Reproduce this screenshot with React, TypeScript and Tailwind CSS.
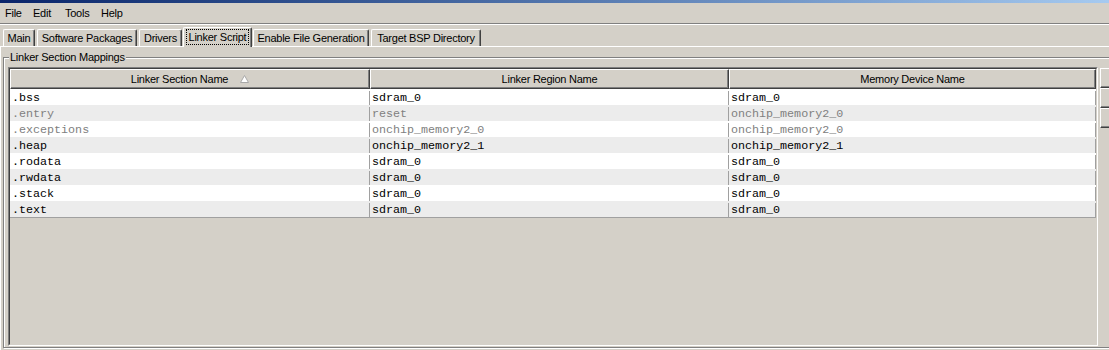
import React from "react";

const rows = [
  { section: ".bss", region: "sdram_0", device: "sdram_0", dim: false },
  { section: ".entry", region: "reset", device: "onchip_memory2_0", dim: true },
  { section: ".exceptions", region: "onchip_memory2_0", device: "onchip_memory2_0", dim: true },
  { section: ".heap", region: "onchip_memory2_1", device: "onchip_memory2_1", dim: false },
  { section: ".rodata", region: "sdram_0", device: "sdram_0", dim: false },
  { section: ".rwdata", region: "sdram_0", device: "sdram_0", dim: false },
  { section: ".stack", region: "sdram_0", device: "sdram_0", dim: false },
  { section: ".text", region: "sdram_0", device: "sdram_0", dim: false },
];

function SortArrow() {
  return (
    <svg width="9" height="8" viewBox="0 0 9 8" className="ml-[12px]">
      <path d="M4.5 0.5 L8.5 7.5 L0.5 7.5 Z" fill="#ffffff" stroke="#a8a8a8" strokeWidth="1" />
    </svg>
  );
}

function HeaderCell({ w, children }: { w: string; children: React.ReactNode }) {
  return (
    <div
      className={`${w} h-[20px] flex items-center justify-center border-t border-l border-white border-r border-b border-r-[#404040] border-b-[#404040] shadow-[inset_-1px_-1px_0_#808080]`}
    >
      {children}
    </div>
  );
}

export default function App() {
  return (
    <div className="w-[1109px] h-[350px] overflow-hidden bg-[#d4d0c8] text-black font-['Liberation_Sans',Arial,sans-serif] text-[11px] tracking-[-0.25px] leading-none flex flex-col">
      {/* window title strip */}
      <div className="h-[3px] shrink-0 bg-linear-to-r from-[#0a246a] to-[#a6caf0]" />

      {/* menu bar */}
      <div className="h-[20px] shrink-0 flex items-center">
        <span className="ml-[5px] w-[28px]">File</span>
        <span className="w-[32px]">Edit</span>
        <span className="w-[36px]">Tools</span>
        <span>Help</span>
      </div>
      <div className="h-px shrink-0 bg-[#808080]" />
      <div className="h-px shrink-0 bg-white" />

      {/* tabs */}
      <div className="h-[21px] shrink-0 flex items-end">
        <div className="ml-[3px] w-[32px] h-[17px] flex items-center justify-center rounded-t-[2px] border-t border-l border-white border-r border-r-[#404040] shadow-[inset_-1px_0_0_#808080]">
          Main
        </div>
        <div className="ml-[2px] w-[100px] h-[17px] flex items-center justify-center rounded-t-[2px] border-t border-l border-white border-r border-r-[#404040] shadow-[inset_-1px_0_0_#808080]">
          Software Packages
        </div>
        <div className="ml-[2px] w-[43px] h-[17px] flex items-center justify-center rounded-t-[2px] border-t border-l border-white border-r border-r-[#404040] shadow-[inset_-1px_0_0_#808080]">
          Drivers
        </div>
        <div className="relative z-10 ml-[1px] -mb-px w-[69px] h-[20px] bg-[#d4d0c8] flex items-start justify-center pt-[1px] rounded-t-[2px] border-t border-l border-white border-r border-r-[#404040] shadow-[inset_-1px_0_0_#808080]">
          <span className="h-[16px] px-[2px] flex items-center border border-dotted border-black">
            Linker Script
          </span>
        </div>
        <div className="ml-[1px] w-[116px] h-[17px] flex items-center justify-center rounded-t-[2px] border-t border-l border-white border-r border-r-[#404040] shadow-[inset_-1px_0_0_#808080]">
          Enable File Generation
        </div>
        <div className="ml-[2px] w-[110px] h-[17px] flex items-center justify-center rounded-t-[2px] border-t border-l border-white border-r border-r-[#404040] shadow-[inset_-1px_0_0_#808080]">
          Target BSP Directory
        </div>
      </div>

      {/* tab panel */}
      <div className="flex-1 border-t border-l border-white">
        {/* group box */}
        <div className="relative ml-[2px] mt-[10px] w-[1110px] h-[291px] border border-[#808080] shadow-[inset_1px_1px_0_#ffffff,1px_1px_0_#ffffff]">
          <span className="absolute -top-[7px] left-[5px] bg-[#d4d0c8] px-px leading-[13px]">
            Linker Section Mappings
          </span>

          <div className="flex pt-[9px] pl-[4px]">
            {/* table with sunken border */}
            <div className="w-[1090px] h-[279px] border border-t-[#808080] border-l-[#808080] border-b-white border-r-white">
              <div className="h-full border border-t-[#404040] border-l-[#404040] border-b-[#d4d0c8] border-r-[#d4d0c8] flex flex-col">
                <div className="flex shrink-0">
                  <HeaderCell w="w-[360px]">
                    <span>Linker Section Name</span>
                    <SortArrow />
                  </HeaderCell>
                  <HeaderCell w="w-[359px]">Linker Region Name</HeaderCell>
                  <HeaderCell w="w-[367px]">Memory Device Name</HeaderCell>
                </div>
                <div className="border-b border-[#a0a0a0] font-['Liberation_Mono','Courier_New',monospace] text-[11.7px] tracking-normal">
                  {rows.map((r, i) => (
                    <div
                      key={r.section}
                      className={`flex h-[16px] pt-[2px] leading-[14px] ${i % 2 === 0 ? "bg-white" : "bg-[#ececec]"} ${r.dim ? "text-[#808080]" : "text-black"}`}
                    >
                      <div className="w-[360px] pl-[2px] border-r border-[#a0a0a0]">{r.section}</div>
                      <div className="w-[359px] pl-[2px] border-r border-[#a0a0a0]">{r.region}</div>
                      <div className="w-[367px] pl-[2px] border-r border-[#a0a0a0]">{r.device}</div>
                    </div>
                  ))}
                </div>
              </div>
            </div>

            {/* side buttons, cut off at the window edge */}
            <div className="ml-[2px] mt-[1px] flex flex-col">
              <div className="w-[16px] h-[20px] border-t border-l border-white border-b border-b-[#404040] shadow-[inset_0_-1px_0_#808080]" />
              <div className="w-[16px] h-[20px] border-t border-l border-white border-b border-b-[#404040] shadow-[inset_0_-1px_0_#808080]" />
              <div className="w-[16px] h-[20px] border-t border-l border-white border-b border-b-[#404040] shadow-[inset_0_-1px_0_#808080]" />
            </div>
          </div>
        </div>
      </div>
    </div>
  );
}
